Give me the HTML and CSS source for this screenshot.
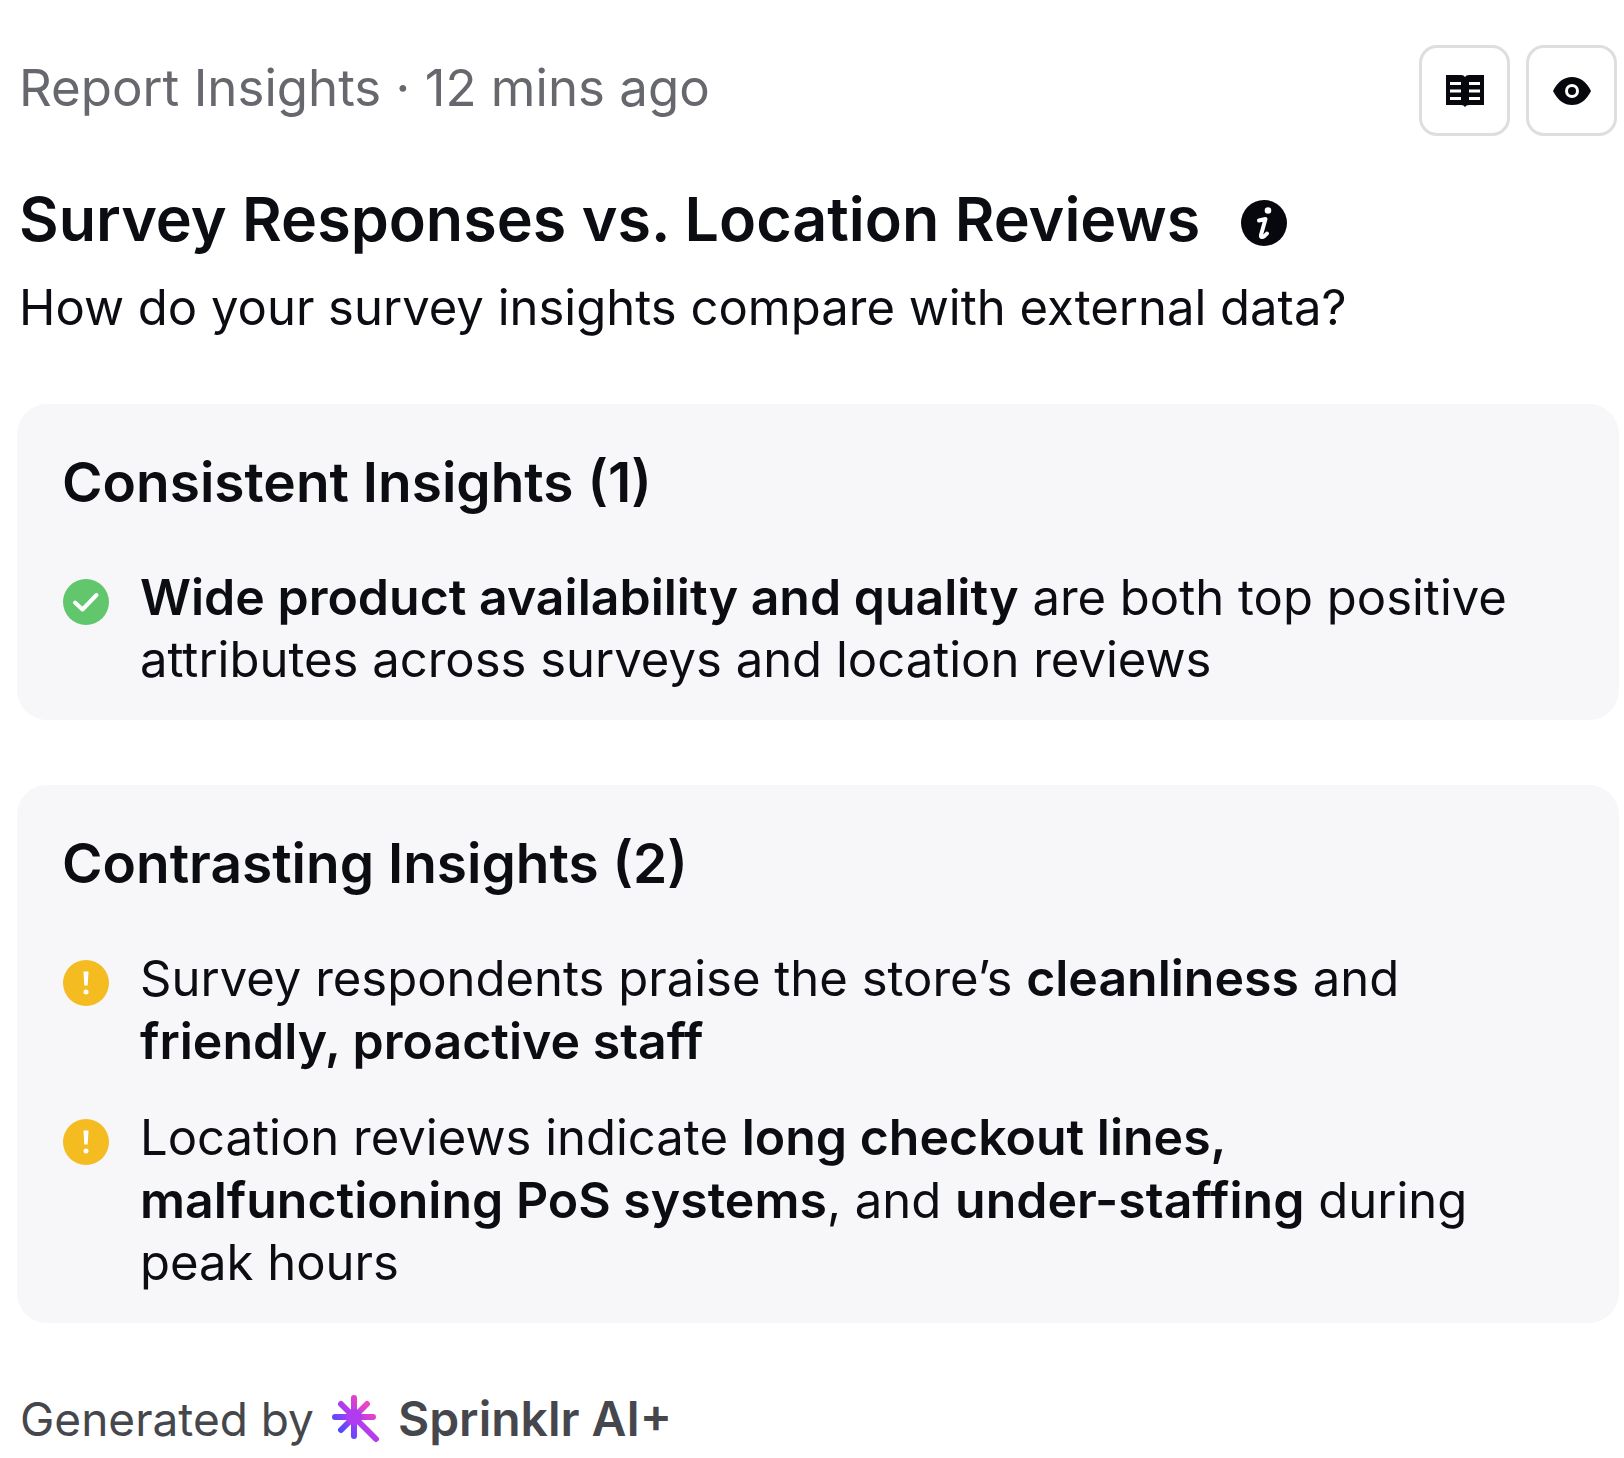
FILE: index.html
```
<!DOCTYPE html>
<html lang="en">
<head>
    <meta charset="UTF-8">
    <meta name="viewport" content="width=device-width, initial-scale=1.0">
    <title>Report Insights</title>
    <link rel="stylesheet" href="styles.css">
</head>
<body>
    <main class="report">
        <header class="topbar">
            <p class="meta">Report Insights · 12 mins ago</p>
            <div class="actions">
                <button type="button" class="icon-button" aria-label="Open report">
                    <svg width="40" height="34" viewBox="0 0 40 34">
                        <path fill="#06080d" d="M1 1h15q3 0 4 2q1-2 4-2h15v30H24q-3 0-4 2q-1-2-4-2H1z"/>
                        <path stroke="#fff" stroke-width="3" d="M5 9.500h11M24 9.500h11M5 17h11M24 17h11M5 24.500h11M24 24.500h11"/>
                    </svg>
                </button>
                <button type="button" class="icon-button" aria-label="Preview">
                    <svg width="40" height="30" viewBox="0 0 40 30">
                        <path fill="#06080d" d="M1 15Q8 1 20 1t19 14Q32 29 20 29T1 15z"/>
                        <circle cx="20" cy="15" r="5.500" fill="none" stroke="#fff" stroke-width="3"/>
                    </svg>
                </button>
            </div>
        </header>

        <div class="heading">
            <h1>Survey Responses vs. Location Reviews</h1>
            <svg class="info" width="48" height="48" viewBox="0 0 48 48">
                <circle cx="24" cy="24" r="23" fill="#06080d"/>
                <circle cx="28" cy="11.500" r="3.300" fill="#fff"/>
                <path d="M19 21.500l6.500-1.500-4.500 16q-.5 2.500 1.500 2t4.500-3.500" fill="none" stroke="#fff" stroke-width="4" stroke-linecap="round" stroke-linejoin="round"/>
            </svg>
        </div>
        <p class="subtitle">How do your survey insights compare with external data?</p>

        <!-- Insight cards -->
        <section class="card">
            <h2>Consistent Insights (1)</h2>
            <ul class="insights">
                <li>
                    <svg class="status" width="48" height="48" viewBox="0 0 48 48">
                        <circle cx="24" cy="24" r="23" fill="#62c76c"/>
                        <path d="M13 24.500l7.500 7L34.500 17" fill="none" stroke="#fff" stroke-width="4" stroke-linecap="round" stroke-linejoin="round"/>
                    </svg>
                    <p><strong>Wide product availability and quality</strong> are both top positive attributes across surveys and location reviews</p>
                </li>
            </ul>
        </section>

        <section class="card">
            <h2>Contrasting Insights (2)</h2>
            <ul class="insights">
                <li>
                    <svg class="status" width="48" height="48" viewBox="0 0 48 48">
                        <circle cx="24" cy="24" r="23" fill="#f4bc20"/>
                        <path d="M21.500 12.500h5l-.8 14h-3.400z" fill="#fff"/>
                        <circle cx="24" cy="33" r="2.500" fill="#fff"/>
                    </svg>
                    <p>Survey respondents praise the store’s <strong>cleanliness</strong> and <strong>friendly, proactive staff</strong></p>
                </li>
                <li>
                    <svg class="status" width="48" height="48" viewBox="0 0 48 48">
                        <circle cx="24" cy="24" r="23" fill="#f4bc20"/>
                        <path d="M21.500 12.500h5l-.8 14h-3.400z" fill="#fff"/>
                        <circle cx="24" cy="33" r="2.500" fill="#fff"/>
                    </svg>
                    <p>Location reviews indicate <strong>long checkout lines, malfunctioning PoS systems</strong>, and <strong>under-staffing</strong> during peak hours</p>
                </li>
            </ul>
        </section>

        <footer class="footer">
            <span>Generated by</span>
            <svg width="48" height="48" viewBox="0 0 48 48">
                <defs>
                    <linearGradient id="spark" gradientUnits="userSpaceOnUse" x1="8" y1="36" x2="36" y2="10">
                        <stop offset="0" stop-color="#4a4bff"/>
                        <stop offset="0.5" stop-color="#b03cf0"/>
                        <stop offset="1" stop-color="#ee45c0"/>
                    </linearGradient>
                </defs>
                <path d="M22 3v38M3 22.010h38M9 9l35 35M35 9L9 35" fill="none" stroke="url(#spark)" stroke-width="6" stroke-linecap="round"/>
                <circle cx="22" cy="22" r="8" fill="#b03cf0"/>
            </svg>
            <strong>Sprinklr AI+</strong>
        </footer>
    </main>
</body>
</html>
```
FILE: styles.css
```
body {
    margin: 0;
    background-color: #fff;
    color: #0b0d12;
    font-family: Inter, "Liberation Sans", sans-serif;
    font-size: 49px;
    line-height: 62px;
}
h1, h2, p, ul {
    margin: 0;
    padding: 0;
}
h1, h2, strong {
    font-weight: 600;
}
.report {
    padding: 45px 5px 0 17px;
}
.topbar {
    display: flex;
    justify-content: space-between;
    padding: 0 2px;
}
.meta {
    padding-top: 12px;
    font-size: 51px;
    color: #66686e;
}
.actions {
    display: flex;
    gap: 16px;
}
.icon-button {
    display: flex;
    align-items: center;
    justify-content: center;
    width: 91px;
    height: 91px;
    padding: 0;
    background-color: #fff;
    border: 3px solid #dedede;
    border-radius: 18px;
    cursor: pointer;
}
.heading {
    display: flex;
    align-items: center;
    gap: 40px;
    margin-top: 47px;
    padding: 0 2px;
}
h1 {
    font-size: 61px;
    line-height: 72px;
}
.info {
    margin-top: 8px;
}
.subtitle {
    margin-top: 22px;
    padding: 0 2px;
}
.card {
    margin-top: 65px;
    padding: 46px 47px 29px 45px;
    background-color: #f7f7fa;
    border-radius: 30px;
}
h2 {
    font-size: 55px;
    line-height: 64px;
}
.insights {
    display: flex;
    flex-direction: column;
    gap: 33px;
    margin-top: 52px;
    list-style: none;
}
.insights li {
    display: flex;
    gap: 30px;
}
.insights strong {
    font-size: 50px;
}
.status {
    flex: none;
    margin-top: 12px;
}
.footer {
    display: flex;
    align-items: center;
    gap: 18px;
    margin-top: 65px;
    padding: 0 3px;
    font-size: 46px;
    color: #45474d;
}
.footer strong {
    font-size: 48px;
}
```
